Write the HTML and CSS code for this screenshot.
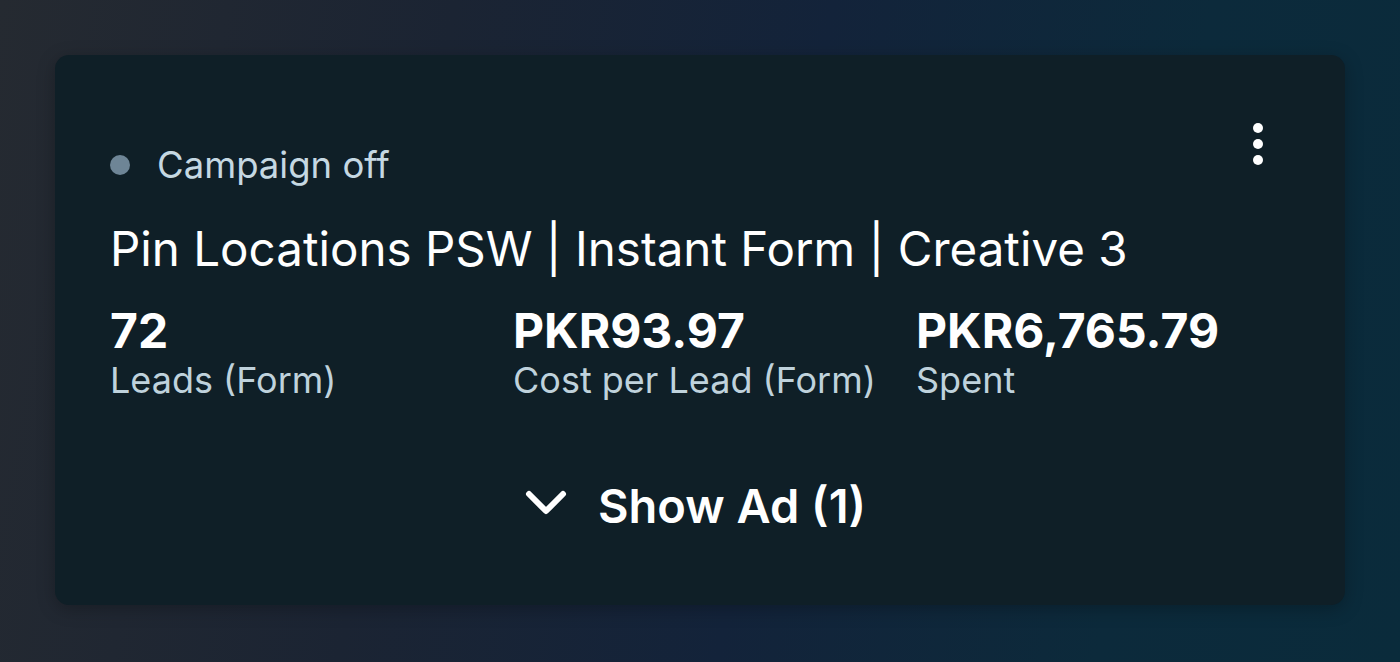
FILE: index.html
```html
<!DOCTYPE html>
<html>
<head>
<meta charset="utf-8">
<link rel="stylesheet" href="styles.css">
</head>
<body>
<div class="page">
  <div class="card">
    <div class="top">
      <div class="status">
        <span class="dot"></span>
        <span class="status-text">Campaign off</span>
      </div>
      <div class="kebab" aria-label="More">
        <span></span><span></span><span></span>
      </div>
    </div>
    <div class="title">Pin Locations PSW | Instant Form | Creative 3</div>
    <div class="metrics">
      <div class="metric">
        <div class="value">72</div>
        <div class="label">Leads (Form)</div>
      </div>
      <div class="metric">
        <div class="value">PKR93.97</div>
        <div class="label">Cost per Lead (Form)</div>
      </div>
      <div class="metric">
        <div class="value">PKR6,765.79</div>
        <div class="label">Spent</div>
      </div>
    </div>
    <div class="show">
      <svg class="chev" width="42" height="32" viewBox="0 0 42 32"><path d="M4 6 L21 23 L38 6" fill="none" stroke="#ffffff" stroke-width="6" stroke-linecap="round" stroke-linejoin="round"/></svg>
      <span class="show-text">Show Ad (1)</span>
    </div>
  </div>
</div>
</body>
</html>
```
FILE: styles.css
```css
* { box-sizing: border-box; }
html, body { margin: 0; padding: 0; }
body {
  width: 1400px;
  height: 662px;
  overflow: hidden;
  font-family: Inter, "Noto Sans", sans-serif;
  background: linear-gradient(100deg, #252a31 0%, #1b2433 30%, #13233a 55%, #0c2a3b 80%, #0a2b3b 100%);
}
.page {
  padding: 55px 55px 0 55px;
}
.card {
  height: 550px;
  background: #0f1f27;
  border-radius: 14px;
  box-shadow: 0 4px 18px rgba(0,0,0,0.25);
  padding: 0 55px;
  position: relative;
}
.top {
  display: flex;
  justify-content: space-between;
  align-items: flex-start;
  padding-top: 88px;
}
.status {
  display: flex;
  align-items: center;
  gap: 27px;
}
.dot {
  width: 20px;
  height: 20px;
  border-radius: 50%;
  background: #6e8596;
}
.status-text {
  color: #c5d8e2;
  font-size: 36.5px;
  line-height: 44px;
}
.kebab {
  position: absolute;
  top: 68px;
  right: 82px;
  display: flex;
  flex-direction: column;
  gap: 6px;
}
.kebab span {
  width: 10px;
  height: 10px;
  border-radius: 50%;
  background: #ffffff;
}
.title {
  color: #ffffff;
  font-size: 47.5px;
  line-height: 56px;
  margin-top: 34px;
}
.metrics {
  display: grid;
  grid-template-columns: 403px 403px 1fr;
  margin-top: 27px;
}
.value {
  color: #ffffff;
  font-size: 48px;
  font-weight: 700;
  line-height: 54px;
}
.label {
  color: #bfd2dc;
  font-size: 36px;
  line-height: 44px;
}
.show {
  display: flex;
  justify-content: center;
  align-items: center;
  gap: 31px;
  margin-top: 76px;
  margin-left: -9px;
}
.chev {
  margin-bottom: 4px;
}
.show-text {
  color: #ffffff;
  font-size: 47px;
  font-weight: 600;
  line-height: 56px;
}
```
